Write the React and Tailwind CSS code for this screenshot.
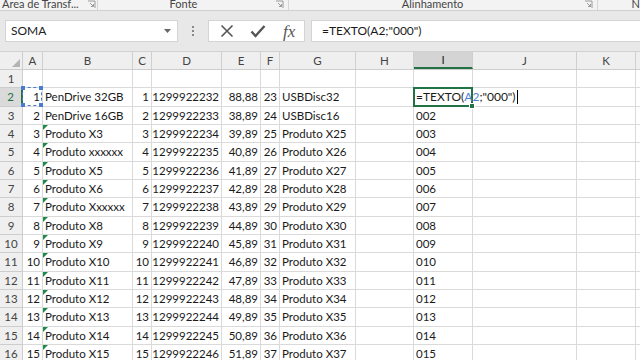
import React from "react"

const font = { fontFamily: "Lato, 'Open Sans', sans-serif" }

const cols = [
  { k: "A", w: "w-[20px]", al: "justify-end pr-[2px]" },
  { k: "B", w: "w-[90px]", al: "justify-start pl-[2px]" },
  { k: "C", w: "w-[19px]", al: "justify-end pr-[2px]" },
  { k: "D", w: "w-[70px]", al: "justify-end pr-[2px]" },
  { k: "E", w: "w-[39px]", al: "justify-end pr-[2px]" },
  { k: "F", w: "w-[19px]", al: "justify-end pr-[2px]" },
  { k: "G", w: "w-[76px]", al: "justify-start pl-[2px]" },
  { k: "H", w: "w-[58px]", al: "justify-start pl-[2px]" },
  { k: "I", w: "w-[59px]", al: "justify-start pl-[2px]" },
  { k: "J", w: "w-[104px]", al: "justify-start pl-[2px]" },
  { k: "K", w: "w-[59px]", al: "justify-start pl-[2px]" },
  { k: "L", w: "w-[60px]", al: "justify-start pl-[2px]" },
]

const names = {
  1: "PenDrive 32GB",
  2: "PenDrive 16GB",
  4: "Produto xxxxxx",
  7: "Produto Xxxxxx",
}
const gNames = { 1: "USBDisc32", 2: "USBDisc16" }

const rows = [["", "", "", "", "", "", "", "", "", "", "", ""]]
for (let n = 1; n <= 15; n++) {
  rows.push([
    String(n),
    names[n] || `Produto X${n}`,
    String(n),
    String(1299922231 + n),
    n === 1 ? "88,88" : `${36 + n},89`,
    String(22 + n),
    gNames[n] || `Produto X${22 + n}`,
    "",
    n === 1 ? "" : String(n).padStart(3, "0"),
    "",
    "",
    "",
  ])
}

const Launcher = () => (
  <svg width="9" height="9" viewBox="0 0 9 9" className="shrink-0">
    <path d="M1 1h7v7" fill="none" stroke="#9a9a9a" strokeWidth="1" />
    <path d="M3 3l3.5 3.5M6.5 4v2.5H4" fill="none" stroke="#9a9a9a" strokeWidth="1" />
  </svg>
)

const Formula = () => (
  <span>
    =TEXTO(<span className="text-[#4f7fcf]">A2</span>;"000")
  </span>
)

const Cell = ({ col, value, r, ci }) => {
  const isA2 = r === 1 && ci === 0
  const isI2 = r === 1 && ci === 8
  const tri = ci === 1 && r >= 3
  return (
    <div
      className={`relative h-full ${col.w} shrink-0 flex items-center ${col.al} border-r border-b border-[#dadada] whitespace-nowrap text-[11.5px] text-[#1a1a1a] overflow-visible`}
    >
      {tri && (
        <div className="absolute left-0 top-0 w-0 h-0 border-t-[5px] border-r-[5px] border-t-[#1e8a4a] border-r-transparent" />
      )}
      {isI2 ? (
        <span className="relative z-30 flex items-center text-[12px]">
          <Formula />
          <span className="ml-[1px] w-[1px] h-[14px] bg-black" />
        </span>
      ) : (
        <span>{value}</span>
      )}
      {isA2 && (
        <div className="absolute -left-[1px] -top-[1px] right-0 bottom-0 border border-dashed border-[#4a7bd0] z-10">
          <div className="absolute -left-[2px] -top-[2px] w-[4px] h-[4px] bg-[#4a7bd0]" />
          <div className="absolute -right-[2px] -top-[2px] w-[4px] h-[4px] bg-[#4a7bd0]" />
          <div className="absolute -left-[2px] -bottom-[2px] w-[4px] h-[4px] bg-[#4a7bd0]" />
          <div className="absolute -right-[2px] -bottom-[2px] w-[4px] h-[4px] bg-[#4a7bd0]" />
        </div>
      )}
      {isI2 && (
        <div className="absolute -left-[1px] -top-[1px] right-[-1px] bottom-[-1px] border-2 border-[#217346] z-20">
          <div className="absolute -right-[4px] -bottom-[4px] w-[6px] h-[6px] bg-[#217346] border border-white" />
        </div>
      )}
    </div>
  )
}

export default function App() {
  return (
    <div className="w-[640px] h-[360px] overflow-hidden bg-white" style={font}>
      {/* ribbon group labels (cut off at the top) */}
      <div className="h-[11px] bg-[#f3f3f3] border-b border-[#cfcfcf] overflow-hidden flex items-start text-[11px] text-[#444]">
        <div className="-mt-[3px] flex items-center w-[98px] pl-[2px] gap-[8px] border-r border-[#d6d6d6] h-[14px]">
          <span>Área de Transf...</span>
          <Launcher />
        </div>
        <div className="-mt-[3px] flex items-center w-[192px] h-[14px] border-r border-[#d6d6d6]">
          <span className="ml-[72px]">Fonte</span>
          <span className="ml-auto mr-[4px]">
            <Launcher />
          </span>
        </div>
        <div className="-mt-[3px] flex items-center w-[310px] h-[14px] border-r border-[#d6d6d6]">
          <span className="ml-[113px]">Alinhamento</span>
          <span className="ml-auto mr-[4px]">
            <Launcher />
          </span>
        </div>
        <div className="-mt-[3px] h-[14px] pl-[34px] flex items-center">N</div>
      </div>

      {/* formula bar */}
      <div className="h-[41px] bg-[#e8e8e8] flex items-center pl-[5px] border-b border-[#d2d2d2]">
        <div className="w-[173px] h-[22px] bg-white border border-[#d4d4d4] flex items-center pl-[5px] pr-[5px] text-[12px] text-[#222]">
          <span>SOMA</span>
          <svg width="7" height="4" viewBox="0 0 7 4" className="ml-auto mr-[1px]">
            <path d="M0 0h7L3.5 4z" fill="#666" />
          </svg>
        </div>
        <div className="w-[30px] flex justify-center">
          <div className="flex flex-col gap-[2px]">
            <div className="w-[2px] h-[2px] bg-[#888]" />
            <div className="w-[2px] h-[2px] bg-[#888]" />
            <div className="w-[2px] h-[2px] bg-[#888]" />
          </div>
        </div>
        <div className="w-[97px] h-[22px] bg-white border border-[#d4d4d4] flex items-center">
          <svg width="14" height="14" viewBox="0 0 14 14" className="ml-[11px]">
            <path d="M1.5 1.5l11 11M12.5 1.5l-11 11" stroke="#555" strokeWidth="1.6" />
          </svg>
          <svg width="16" height="14" viewBox="0 0 16 14" className="ml-[16px]">
            <path d="M1.5 7.5l4 4.5L14.5 2" fill="none" stroke="#555" strokeWidth="2.4" />
          </svg>
          <span
            className="ml-[17px] text-[17px] italic text-[#555] leading-none"
            style={{ fontFamily: "'Liberation Serif', serif" }}
          >
            fx
          </span>
        </div>
        <div className="ml-[6px] flex-1 h-[22px] bg-white border-l border-y border-[#d4d4d4] flex items-center pl-[10px] text-[12px] text-[#1a1a1a]">
          =TEXTO(A2;"000")
        </div>
      </div>

      {/* column headers */}
      <div className="h-[18px] flex bg-[#efefef] border-b border-[#cdcdcd]">
        <div className="w-[23px] shrink-0 h-full border-r border-[#cdcdcd] flex items-end justify-end pr-[2px] pb-[2px]">
          <div className="w-0 h-0 border-b-[8px] border-l-[8px] border-b-[#b4b4b4] border-l-transparent" />
        </div>
        {cols.map((c, i) => (
          <div
            key={c.k}
            className={`${c.w} shrink-0 h-full flex items-center justify-center text-[11.5px] border-r border-[#d0d0d0] ${
              i === 8 ? "bg-[#d4d4d4] text-[#222] border-b-2 border-b-[#217346]" : "text-[#444]"
            }`}
          >
            {c.k}
          </div>
        ))}
      </div>

      {/* rows */}
      {rows.map((row, r) => (
        <div key={r} className="h-[18.33px] flex">
          <div
            className={`w-[23px] shrink-0 h-full flex items-center justify-center text-[11.5px] border-b ${
              r === 1
                ? "bg-[#dadada] text-[#217346] border-r-2 border-r-[#217346] border-b-[#cdcdcd]"
                : "bg-[#efefef] text-[#444] border-r border-[#cdcdcd]"
            }`}
          >
            {r + 1}
          </div>
          {cols.map((c, ci) => (
            <Cell key={c.k} col={c} value={row[ci]} r={r} ci={ci} />
          ))}
        </div>
      ))}
    </div>
  )
}
